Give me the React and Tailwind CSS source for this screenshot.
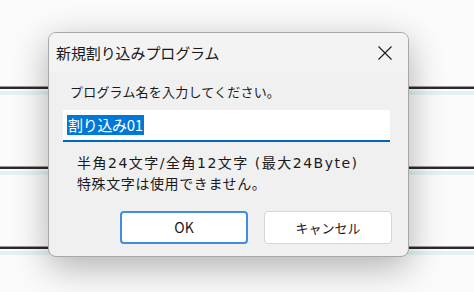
export default function App() {
  const font = { fontFamily: '"Noto Sans CJK JP", "Noto Sans", sans-serif' };
  const Line = () => (
    <div className="flex flex-col">
      <div className="h-px bg-[#9a9a9a]" />
      <div className="h-[2px] bg-[#2b2b2b]" />
      <div className="h-[2px]" />
      <div className="h-[4px] bg-[#e3f3f3]" />
    </div>
  );
  return (
    <div className="relative w-[474px] h-[292px] overflow-hidden bg-[#fbfbfb]" style={font}>
      <div className="flex flex-col pt-[86px] gap-[71px]">
        <Line />
        <Line />
        <Line />
      </div>
      <div className="absolute left-[48px] top-[32px] w-[361px] h-[225px] rounded-[8px] border border-[#a8a8a8] bg-[#f0f0f0] overflow-hidden shadow-[0_10px_36px_rgba(0,0,0,0.30)] flex flex-col">
        <div className="h-[39px] bg-[#f3f3f3] flex items-center justify-between pl-[7px] pr-[15px]">
          <span className="text-[15px] leading-none text-[#1a1a1a] tracking-[-0.1px]">新規割り込みプログラム</span>
          <svg width="16" height="16" viewBox="0 0 16 16" className="text-[#1a1a1a]">
            <path d="M1.5 1.5 L14.5 14.5 M14.5 1.5 L1.5 14.5" stroke="currentColor" strokeWidth="1.1" fill="none" />
          </svg>
        </div>
        <div className="flex flex-col flex-1 px-[14px]">
          <div className="pt-[11px] pl-[7px] text-[13px] leading-[18px] text-[#1a1a1a] tracking-[0.2px]">プログラム名を入力してください。</div>
          <div className="mt-[9px] h-[32px] w-[327px] bg-white border-b-2 border-[#0067c0] flex items-center pl-[4px]">
            <span className="bg-[#0078d7] text-white text-[15px] leading-[20px] tracking-[-0.3px] px-px">割り込み01</span>
          </div>
          <div className="mt-[11px] pl-[14px] text-[14px] leading-[20px] text-[#1a1a1a]">
            <div className="tracking-[1.5px]" style={{ fontFamily: '"DejaVu Sans", "Noto Sans CJK JP", sans-serif' }}>半角24文字/全角12文字 (最大24Byte)</div>
            <div className="tracking-[0.6px]">特殊文字は使用できません。</div>
          </div>
          <div className="mt-[18px] flex justify-end gap-[16px] pr-[2px]">
            <button className="w-[128px] h-[33px] rounded-[4px] bg-white border-2 border-[#3d8ee0] text-[14px] text-[#1a1a1a]">OK</button>
            <button className="w-[128px] h-[33px] rounded-[4px] bg-white border border-[#d6d6d6] text-[13px] text-[#1a1a1a]">キャンセル</button>
          </div>
        </div>
      </div>
    </div>
  );
}
